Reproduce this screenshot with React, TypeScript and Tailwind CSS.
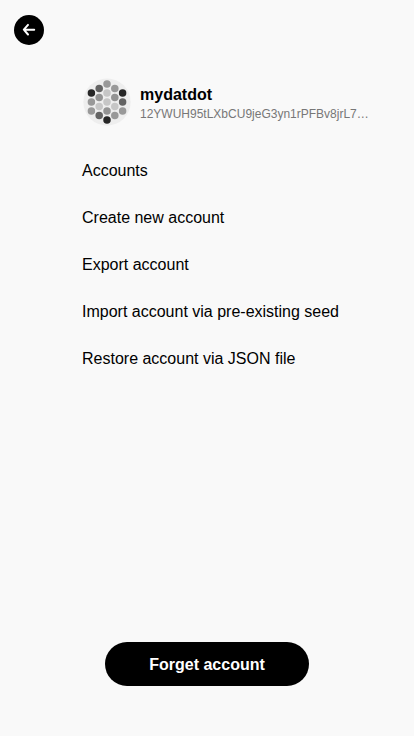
const menuItems = [
  'Accounts',
  'Create new account',
  'Export account',
  'Import account via pre-existing seed',
  'Restore account via JSON file',
];

const dots: [number, number, string][] = [
  [32, 8, '#999999'],
  [32, 20, '#c6c6c6'],
  [32, 32, '#c6c6c6'],
  [32, 44, '#949494'],
  [32, 56, '#272727'],
  [21.6, 14, '#646464'],
  [21.6, 26, '#949494'],
  [21.6, 38, '#c6c6c6'],
  [21.6, 50, '#646464'],
  [42.4, 14, '#999999'],
  [42.4, 26, '#949494'],
  [42.4, 38, '#c6c6c6'],
  [42.4, 50, '#999999'],
  [11.2, 20, '#272727'],
  [11.2, 32, '#999999'],
  [11.2, 44, '#999999'],
  [52.8, 20, '#272727'],
  [52.8, 32, '#646464'],
  [52.8, 44, '#999999'],
];

function Identicon() {
  return (
    <svg className="size-12 shrink-0" viewBox="0 0 64 64">
      <circle cx="32" cy="32" r="31.5" fill="#eeeeee" />
      {dots.map(([cx, cy, fill]) => (
        <circle key={`${cx}-${cy}`} cx={cx} cy={cy} r="5" fill={fill} />
      ))}
    </svg>
  );
}

export default function App() {
  return (
    <div className="flex h-[736px] w-full flex-col bg-[#f9f9f9] font-['Liberation_Sans',Arial,sans-serif] text-base text-black">
      <header className="px-3.5 pt-[15px]">
        <button
          aria-label="Back"
          className="flex size-[30px] items-center justify-center rounded-full bg-black text-white"
        >
          <svg
            className="size-[30px]"
            viewBox="0 0 30 30"
            fill="none"
            stroke="currentColor"
            strokeWidth="2"
            strokeLinecap="round"
            strokeLinejoin="round"
          >
            <path d="M20.2 14.7H10M14 9.9L9.8 14.7L14 19.5" />
          </svg>
        </button>
      </header>

      <section className="mt-[33px] flex items-center gap-[9px] pl-[83px]">
        <Identicon />
        <div className="w-[232px] pt-1">
          <h1 className="text-base leading-5 font-bold">mydatdot</h1>
          <p className="truncate text-xs leading-[18px] text-[#777777]">
            12YWUH95tLXbCU9jeG3yn1rPFBv8jrL7…
          </p>
        </div>
      </section>

      <nav className="mt-9 pl-[82px]">
        <ul className="flex flex-col gap-[29px]">
          {menuItems.map((item) => (
            <li key={item} className="leading-[18px] whitespace-nowrap">
              {item}
            </li>
          ))}
        </ul>
      </nav>

      <footer className="mt-auto flex justify-center pb-[50px]">
        <button className="h-11 w-[204px] rounded-full bg-black pt-0.5 text-base font-bold text-white">
          Forget account
        </button>
      </footer>
    </div>
  );
}
